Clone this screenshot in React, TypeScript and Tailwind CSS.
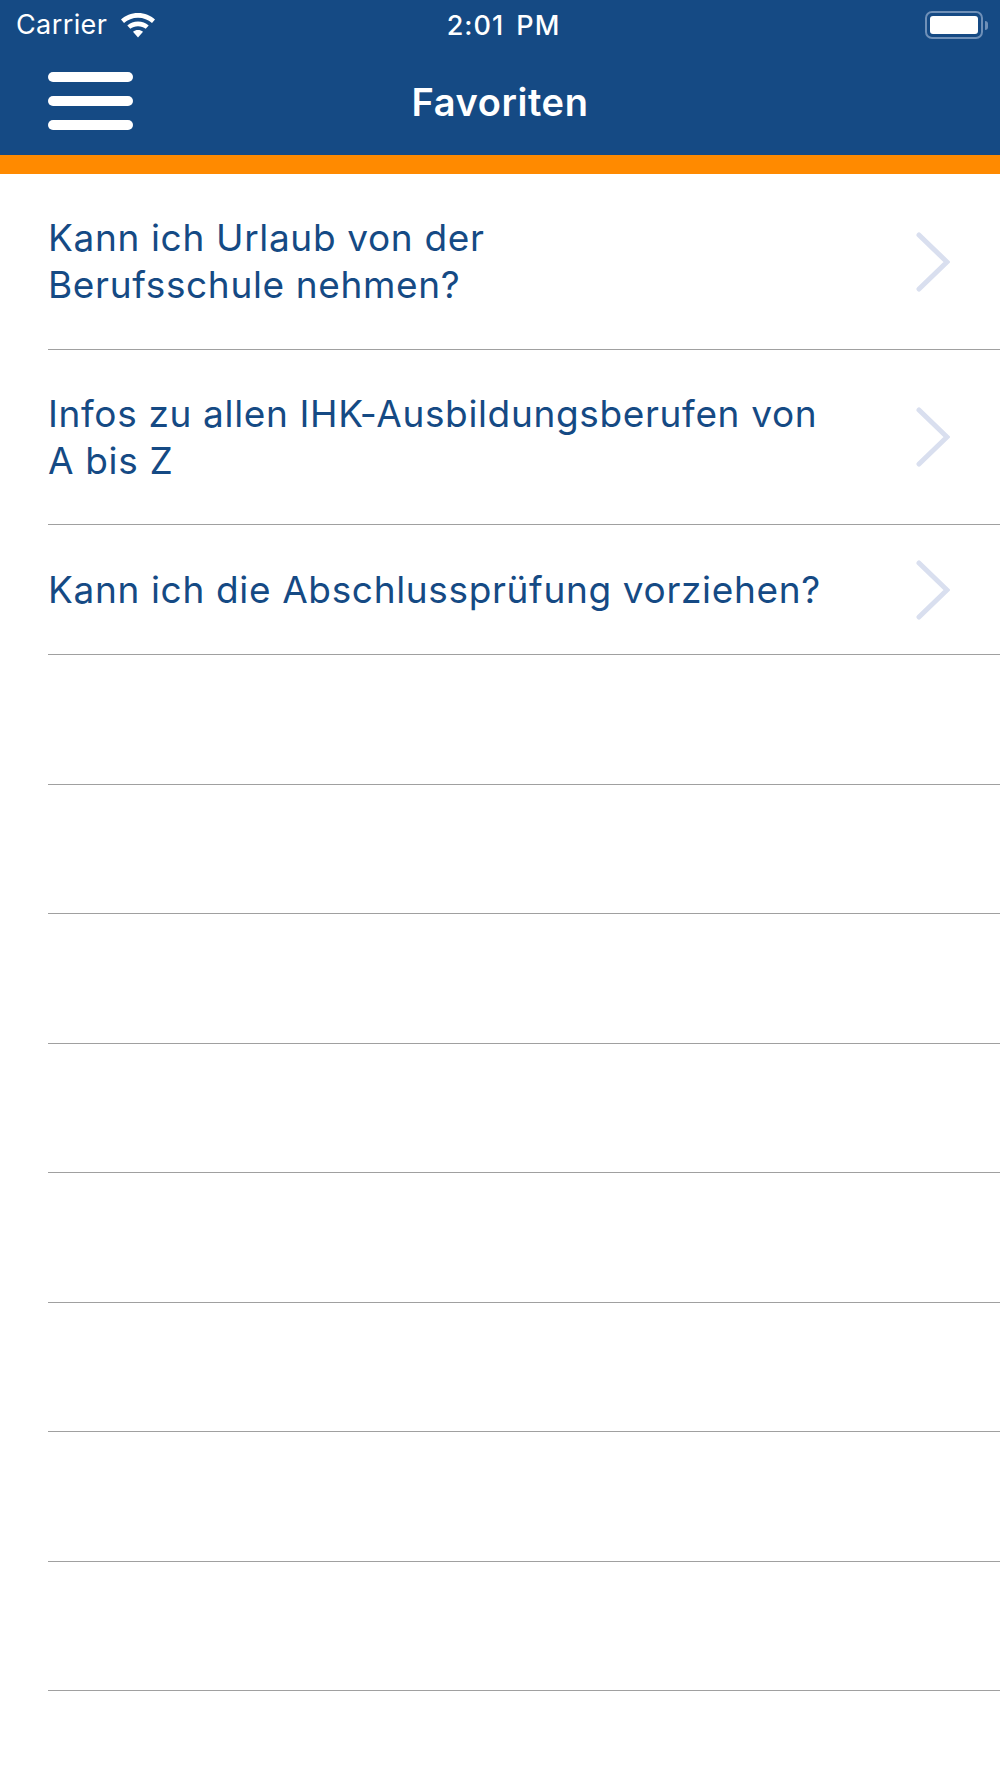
import React from 'react';

const items = [
  ['Kann ich Urlaub von der', 'Berufsschule nehmen?'],
  ['Infos zu allen IHK-Ausbildungsberufen von', 'A bis Z'],
  ['Kann ich die Abschlussprüfung vorziehen?'],
];

const Chevron = () => (
  <svg width="34" height="60" viewBox="0 0 34 60" fill="none" className="shrink-0">
    <path d="M3 3 L31 30 L3 57" stroke="#d9dfef" strokeWidth="5" strokeLinecap="round" />
  </svg>
);

const Wifi = () => (
  <svg width="36" height="26" viewBox="0 0 36 26" fill="white">
    <path d="M18 1C11 1 5.500 3.600 1 7.500L4 11C7.800 7.800 12.600 5.800 18 5.800S28.200 7.800 32 11L35 7.500C30.500 3.600 25 1 18 1Z" />
    <path d="M18 9.500C13.800 9.500 10.300 11 7.300 13.400L10.300 16.800C12.400 15.200 15 14.200 18 14.200S23.600 15.200 25.700 16.800L28.700 13.400C25.700 11 22.200 9.500 18 9.500Z" />
    <path d="M18 18C16 18 14.500 18.500 13 19.700L18 25.500L23 19.700C21.500 18.500 20 18 18 18Z" />
  </svg>
);

const Battery = () => (
  <div className="flex items-center gap-[2px]">
    <div className="w-[58px] h-[28px] rounded-[7px] border-2 border-[#6f90b8] p-[3px]">
      <div className="w-full h-full rounded-[3px] bg-white" />
    </div>
    <div className="w-[3px] h-[9px] rounded-r-full bg-[#6f90b8]" />
  </div>
);

const App = () => {
  return (
    <div className="w-[1000px] h-[1778px] bg-white overflow-hidden font-['Inter',sans-serif]">
      <header className="bg-[#154a84] h-[155px] text-white">
        <div className="h-[50px] pl-4 pr-[12px] grid grid-cols-3 items-center">
          <div className="flex items-center gap-[13px]">
            <span className="text-[27px] tracking-[0.4px] leading-[50px]">Carrier</span>
            <Wifi />
          </div>
          <span className="text-center text-[27px] tracking-[1px] [word-spacing:4px] font-medium whitespace-nowrap pt-[2px] pl-[3px]">2:01 PM</span>
          <div className="flex justify-end">
            <Battery />
          </div>
        </div>
        <div className="relative h-[105px] flex items-center justify-center">
          <div className="absolute left-[48px] top-[22px] w-[85px] flex flex-col gap-[14px]">
            <div className="h-[10px] rounded-full bg-white" />
            <div className="h-[10px] rounded-full bg-white" />
            <div className="h-[10px] rounded-full bg-white" />
          </div>
          <h1 className="text-[38px] font-semibold tracking-[0.6px]">Favoriten</h1>
        </div>
      </header>
      <div className="h-[19px] bg-[#ff8a00]" />
      <ul className="pl-[48px]">
        {items.map((lines, i) => (
          <li
            key={i}
            className={`flex items-center justify-between border-b-[1px] border-[#a0a0a0] pr-[50px] ${
              i === 0 ? 'h-[176px]' : lines.length > 1 ? 'h-[175px]' : 'h-[130px]'
            }`}
          >
            <p className="text-[#154a84] text-[37px] tracking-[0.65px] leading-[47px] pb-[1px]">
              {lines.map((l) => (
                <span key={l} className="block">{l}</span>
              ))}
            </p>
            <Chevron />
          </li>
        ))}
        {Array.from({ length: 8 }).map((_, i) => (
          <li key={i} className="h-[129.500px] border-b-[1px] border-[#a0a0a0]" />
        ))}
      </ul>
    </div>
  );
};

export default App;
